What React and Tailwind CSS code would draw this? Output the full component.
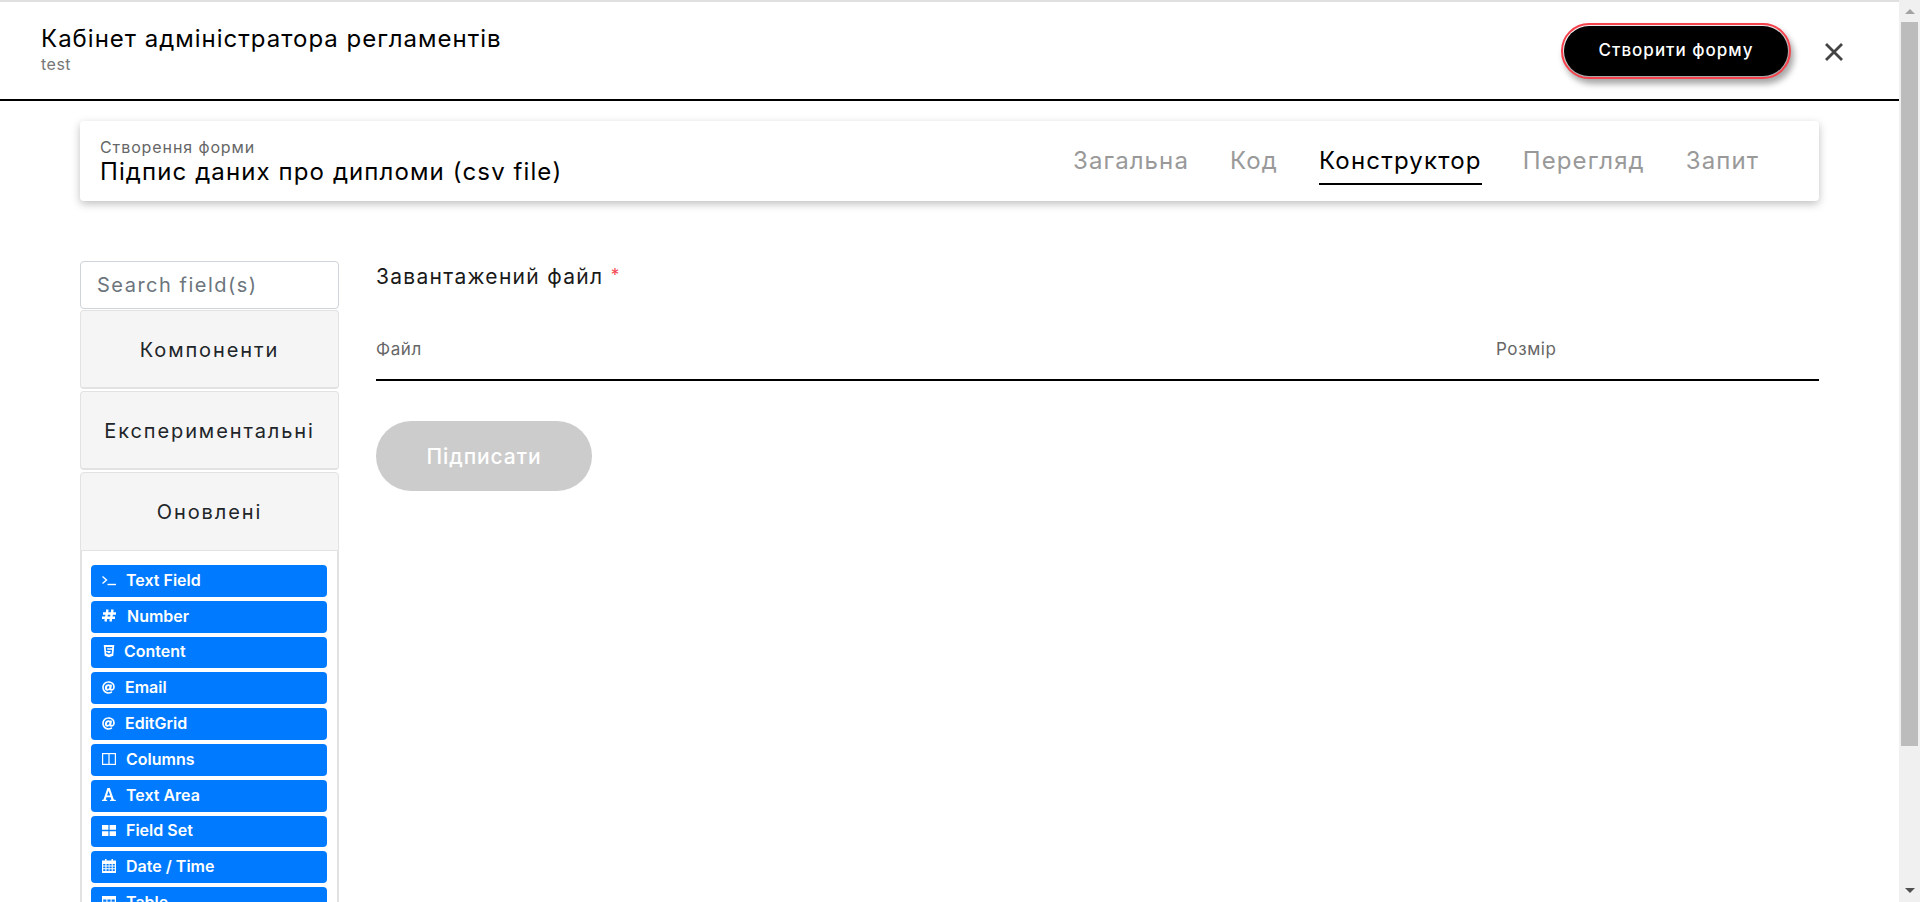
import React from "react";
import { FaHtml5, FaAt } from "react-icons/fa";

const TerminalIcon = () => (
  <svg viewBox="0 0 14 12" className="w-[14px] h-[12px]" fill="none" stroke="currentColor" strokeWidth="1.4">
    <path d="M0.5 2.5 4.5 6 0.5 9.5" />
    <path d="M5.5 10.5H14" />
  </svg>
);

const HashIcon = () => (
  <svg viewBox="0 0 14 13" className="w-[14px] h-[13px]" fill="none" stroke="currentColor" strokeWidth="2.4">
    <path d="M5.5 0.5 3.5 12.5M10.5 0.5 8.5 12.5M1 4.5h13M0 8.8h13" />
  </svg>
);

const ColumnsIcon = () => (
  <svg viewBox="0 0 14 12" className="w-[14px] h-[12px]" fill="none" stroke="currentColor" strokeWidth="1.2">
    <rect x="0.6" y="0.6" width="12.8" height="10.8" />
    <path d="M7 0.6v10.8" />
  </svg>
);

const SerifAIcon = () => (
  <svg viewBox="0 0 14 13" className="w-[14px] h-[13px]" fill="currentColor">
    <path fillRule="evenodd" d="M5.4 0h2.4L11.8 11.6 13.8 12V13H8V12l1.4-.4L8.7 9.2H4.5l-.8 2.4 1.5.4V13H0V12l1.5-.4zM6.6 2.8 5 7.6h3.2z" />
  </svg>
);

const GridIcon = () => (
  <svg viewBox="0 0 14 11" className="w-[14px] h-[11px]" fill="currentColor">
    <path d="M0 0h6.4v4.8H0zM7.6 0H14v4.8H7.6zM0 6.2h6.4V11H0zM7.6 6.2H14V11H7.6z" />
  </svg>
);

const CalendarIcon = () => (
  <svg viewBox="0 0 14 14" className="w-[14px] h-[14px]" fill="currentColor">
    <path d="M3 0h1.5v2H3zM9.5 0H11v2H9.5z" />
    <path fillRule="evenodd" d="M0 1.5h14V14H0zM1.2 5v1.6h2.2V5zm3.3 0v1.6h2.2V5zm3 0v1.6h2.2V5zm3.2 0v1.6h2.1V5zM1.2 7.6v1.6h2.2V7.6zm3.3 0v1.6h2.2V7.6zm3 0v1.6h2.2V7.6zm3.2 0v1.6h2.1V7.6zM1.2 10.3v1.6h2.2v-1.6zm3.3 0v1.6h2.2v-1.6zm3 0v1.6h2.2v-1.6zm3.2 0v1.6h2.1v-1.6z" />
  </svg>
);

const TableIcon = () => (
  <svg viewBox="0 0 14 12" className="w-[14px] h-[12px]" fill="currentColor">
    <path fillRule="evenodd" d="M0 0h14v12H0zM1.2 3.4v2.4h3.2V3.4zm4.2 0v2.4h3.2V3.4zm4.2 0v2.4h3.2V3.4zM1.2 7v2.4h3.2V7zm4.2 0v2.4h3.2V7zm4.2 0v2.4h3.2V7z" />
  </svg>
);

const fields = [
  { label: "Text Field", icon: <TerminalIcon />, gap: "gap-[10px]" },
  { label: "Number", icon: <HashIcon />, gap: "gap-[11px]" },
  { label: "Content", icon: <FaHtml5 size={14} />, gap: "gap-[8px]" },
  { label: "Email", icon: <FaAt size={13} />, gap: "gap-[10px]" },
  { label: "EditGrid", icon: <FaAt size={13} />, gap: "gap-[10px]" },
  { label: "Columns", icon: <ColumnsIcon />, gap: "gap-[10px]" },
  { label: "Text Area", icon: <SerifAIcon />, gap: "gap-[10px]" },
  { label: "Field Set", icon: <GridIcon />, gap: "gap-[10px]" },
  { label: "Date / Time", icon: <CalendarIcon />, gap: "gap-[10px]" },
  { label: "Table", icon: <TableIcon />, gap: "gap-[10px]" },
];

const tabs = ["Загальна", "Код", "Конструктор", "Перегляд", "Запит"];

function Accordion({ label }) {
  return (
    <div className="h-[79px] mb-[2px] pt-[1px] flex items-center justify-center rounded-[4px] bg-[#f5f5f5] border border-[#e2e2e2] border-b-2 text-[20px] text-[#212529] tracking-[1.9px]">
      {label}
    </div>
  );
}

export default function App() {
  return (
    <div className="flex h-[902px] overflow-hidden bg-white font-['Inter',sans-serif]">
      <div className="flex-1 min-w-0 flex flex-col border-t-2 border-[#e0e0e0]">
        {/* header */}
        <header className="h-[99px] shrink-0 flex items-center justify-between border-b-2 border-black pl-[41px] pr-[56px]">
          <div className="-mt-[5px]">
            <div className="text-[24px] leading-[30px] text-black tracking-[1px]">Кабінет адміністратора регламентів</div>
            <div className="mt-[1px] text-[16px] leading-[18px] text-[#777] tracking-[0.5px]">test</div>
          </div>
          <div className="flex items-center gap-[37px]">
            <button className="w-[224px] h-[50px] rounded-full bg-black text-white text-[17px] font-medium tracking-[1px] outline-[2.5px] outline-offset-[1px] outline-[#f5424d] shadow-[3px_5px_6px_3px_rgba(0,0,0,0.35)]">
              Створити форму
            </button>
            <svg viewBox="0 0 18 18" className="w-[18px] h-[18px] mt-[2px] text-[#444]" fill="none" stroke="currentColor" strokeWidth="2.8">
              <path d="M1 1l16 16M17 1 1 17" />
            </svg>
          </div>
        </header>

        <main className="flex-1 min-h-0 pl-[80px] pr-[80px] pt-[20px]">
          {/* form title card */}
          <div className="h-[80px] flex items-center justify-between rounded-[4px] bg-white pl-[20px] pr-[60px] shadow-[0_3px_8px_rgba(0,0,0,0.25)]">
            <div className="pt-[3px]">
              <div className="text-[16px] leading-[18px] text-[#666] tracking-[0.9px]">Створення форми</div>
              <div className="mt-[1px] text-[24px] leading-[30px] text-black tracking-[1.1px]">Підпис даних про дипломи (csv file)</div>
            </div>
            <nav className="flex gap-[41px] self-stretch pt-[24px]">
              {tabs.map((t) =>
                t === "Конструктор" ? (
                  <span key={t} className="h-[40px] border-b-2 border-black text-[24px] leading-[32px] tracking-[1.2px] text-black">{t}</span>
                ) : (
                  <span key={t} className="h-[40px] text-[24px] leading-[32px] tracking-[1.1px] text-[#999]">{t}</span>
                )
              )}
            </nav>
          </div>

          <div className="flex mt-[60px]">
            {/* sidebar */}
            <aside className="w-[259px] shrink-0">
              <div className="h-[48px] flex items-center rounded-[4px] border border-[#ced4da] bg-white px-[16px] mb-[1px] text-[20px] text-[#6c757d] tracking-[1.5px]">
                Search field(s)
              </div>
              <Accordion label="Компоненти" />
              <Accordion label="Експериментальні" />
              <div className="h-[79px] pt-[1px] flex items-center justify-center rounded-t-[4px] bg-[#f5f5f5] border border-[#e2e2e2] text-[20px] text-[#212529] tracking-[1.9px]">
                Оновлені
              </div>
              <div className="border-x-2 border-[#e2e2e2] pl-[9px] pr-[10px] pt-[14px] flex flex-col gap-[4px]">
                {fields.map((f) => (
                  <div key={f.label} className={`h-[31.8px] shrink-0 flex items-center pl-[11px] pb-[2px] rounded-[4px] bg-[#007bff] text-white text-[16px] font-semibold ${f.gap}`}>
                    {f.icon}
                    <span>{f.label}</span>
                  </div>
                ))}
              </div>
            </aside>

            {/* form preview */}
            <section className="flex-1 min-w-0 pl-[37px]">
              <div className="pt-[2px] text-[21px] leading-[28px] text-[#1a1a1a] tracking-[1.3px]">
                Завантажений файл <span className="align-top text-[17px] leading-[24px] text-[#f5424d]">*</span>
              </div>
              <div className="mt-[38px] h-[52px] flex border-b-2 border-black pt-[8px] text-[17px] leading-[24px] text-[#666] tracking-[0.6px]">
                <span className="w-[1120px]">Файл</span>
                <span>Розмір</span>
              </div>
              <button className="mt-[40px] w-[216px] h-[70px] pt-[2px] rounded-full bg-[#cccccc] text-white text-[21px] font-medium tracking-[0.9px]">
                Підписати
              </button>
            </section>
          </div>
        </main>
      </div>

      {/* scrollbar */}
      <div className="w-[21px] shrink-0 flex flex-col bg-[#f0f0f0]">
        <div className="h-[22px] flex items-center justify-center">
          <div className="w-0 h-0 border-x-[5px] border-x-transparent border-b-[5px] border-b-[#a3a3a3]" />
        </div>
        <div className="h-[724px] ml-[2px] mr-[2px] bg-[#bcbcbc]" />
        <div className="flex-1 flex items-end justify-center pb-[9px]">
          <div className="w-0 h-0 border-x-[5px] border-x-transparent border-t-[5px] border-t-[#505050]" />
        </div>
      </div>
    </div>
  );
}
